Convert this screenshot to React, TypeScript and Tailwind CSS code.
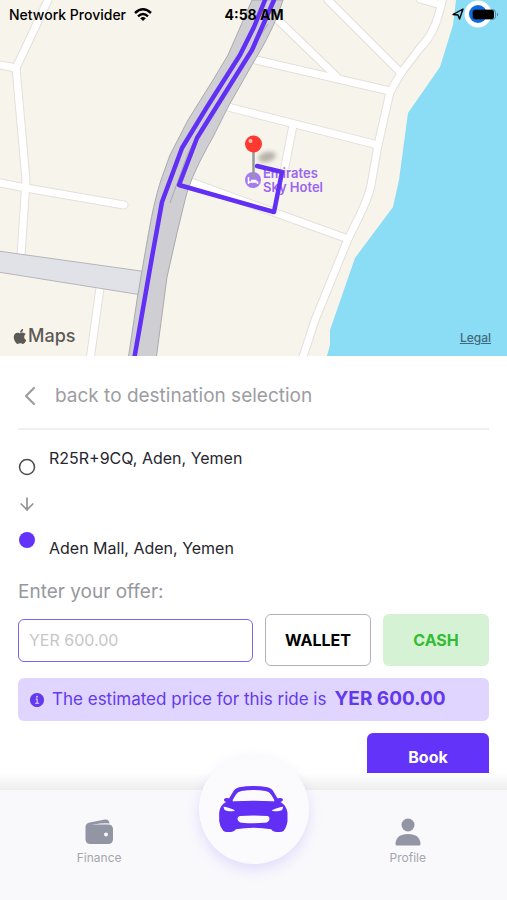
import { useState } from "react";
import { ArrowDown, ChevronLeft, Circle } from "lucide-react";
import { FaApple } from "react-icons/fa";
import { IoInformationCircle } from "react-icons/io5";

const streets = [
    "M48 0 L16 68 L0 65",
    "M16 68 L26 180 L21 256",
    "M0 183 L26 188 L124 205",
    "M100 288 L90 360",
    "M328 0 L401 73",
    "M278 20 L336 76",
    "M256 60 L390 91",
    "M420 -1 L441 5",
    "M443 -4 C438 22 432 36 420 48 L401 73 L390 92 L378 145 L371 185 C368 200 360 215 348 239 L315 320 L302 360",
    "M228 107 L378 145",
    "M293 125 L284 172",
    "M191 182 L276 213 L348 239",
];

const mainRoad =
    "M252 0 L228 55 L213 80 L188 120 L170 155 L161 180 C153 205 150 225 143 265 L137 300 L128 360 L156 360 L167 277 L177 233 L185 200 C190 180 200 160 213 137 L228 107 L253 63 C266 42 276 22 283 0 Z";

function StatusBar() {
    return (
        <div className="absolute inset-x-0 top-0 z-10 grid h-7 grid-cols-3 items-center pl-[9px] pr-2 text-black">
            <div className="flex items-center gap-2 whitespace-nowrap text-[14px] font-medium">
                Network Provider
                <svg viewBox="0 0 18 13" className="h-[13px] w-[18px] shrink-0">
                    <g fill="none" stroke="currentColor" strokeWidth="2.4">
                        <path d="M1 5 Q9 -2.400 17 5" />
                        <path d="M4 8.300 Q9 3.600 14 8.300" />
                    </g>
                    <path d="M6.200 10.200 Q9 7.800 11.800 10.200 L9 13 Z" fill="currentColor" />
                </svg>
            </div>
            <div className="text-center text-[14px] font-bold">4:58 AM</div>
            <div className="flex items-center justify-end gap-2">
                <svg viewBox="0 0 12 12" className="h-3 w-3">
                    <path d="M1 6.500 L11 1 L7.500 11 L6 7 Z" fill="none" stroke="currentColor" strokeWidth="1.4" strokeLinejoin="round" />
                </svg>
                <svg viewBox="0 0 27 11" className="h-[11px] w-[27px]">
                    <rect x="0.500" y="0.500" width="23" height="10" rx="3" fill="none" stroke="#111" strokeOpacity="0.4" />
                    <rect x="1" y="1" width="21" height="9" rx="2" fill="currentColor" />
                    <path d="M25 3.500 Q27 5.500 25 7.500 Z" fill="#111" fillOpacity="0.5" />
                </svg>
            </div>
        </div>
    );
}

function RideMap() {
    return (
        <section className="relative min-h-[280px] flex-1 overflow-hidden bg-[#f7f4ec]">
            <svg viewBox="0 0 507 356" preserveAspectRatio="xMidYMid slice" className="absolute inset-0 h-full w-full">
                {/* Sea */}
                <path d="M456 0 L453 25 L440 67 L408 113 L399 180 L393 207 L355 258 L330 330 L330 345 L327 356 H507 V0 Z" fill="#8bdcf5" />

                {/* Streets */}
                <g fill="none" strokeLinecap="round" strokeLinejoin="round">
                    {streets.map((d) => <path key={d} d={d} stroke="#e3e0dc" strokeWidth="9" />)}
                    {streets.map((d) => <path key={d} d={d} stroke="#fff" strokeWidth="7" />)}
                </g>
                <path d="M-2 251 L148 272 L142 295 L-2 272 Z" fill="#e1e2e7" stroke="#b5b5ba" />
                <path d={mainRoad} fill="#cfcfd3" stroke="#aaaaae" />
                <path d="M268 24 L206 120 L188 153 L170 203" fill="none" stroke="#aaaaae" />

                {/* Hotel */}
                <circle cx="253" cy="180" r="8" fill="#a47cf0" />
                <path d="M248.500 177 V184 M248.500 182 H257.500 V184 M251 180.500 H256.500" fill="none" stroke="#fff" strokeWidth="1.5" />
                <g fill="#9b66ee" stroke="#f7f4ec" strokeWidth="2" paintOrder="stroke" fontSize="13" fontWeight="600">
                    <text x="263" y="178">Emirates</text>
                    <text x="263" y="192">Sky Hotel</text>
                </g>

                {/* Route */}
                <g fill="none" stroke="#6230f5" strokeWidth="4.500" strokeLinecap="round" strokeLinejoin="round">
                    <path d="M265 0 L254 27 L240 55 L207 107 L182 148 L162 202 L152 257 L134 360" />
                    <path d="M274 0 L252 50 L197 138 L179 185 L274 212 L282 172 L257 166" />
                </g>

                {/* Pin */}
                <ellipse cx="267" cy="157" rx="9" ry="5" fill="#77736a" opacity="0.5" transform="rotate(-15 267 157)" className="blur-[2px]" />
                <path d="M253.500 150 V177" stroke="#98989b" strokeWidth="2.500" strokeLinecap="round" />
                <circle cx="253.500" cy="144" r="8.500" fill="#ff3830" />
                <circle cx="250.500" cy="141" r="2" fill="#ffc1bd" />

                {/* Current location */}
                <circle cx="478" cy="14" r="13.500" fill="#fff" />
                <circle cx="478" cy="14" r="9" fill="#0b6be0" />
            </svg>
            <StatusBar />
            <div className="absolute bottom-2 left-3 flex items-center text-[18px] font-medium leading-6 text-[#5b5a55]">
                <FaApple className="h-[17px] w-4" />
                <span>Maps</span>
            </div>
            <a href="#legal" className="absolute bottom-2.5 right-4 text-[12px] font-medium leading-4 text-[#42687c] underline">Legal</a>
        </section>
    );
}

function CarIcon() {
    return (
        <svg viewBox="0 0 206 138" className="h-[46px] w-[69px]">
            <path
                fillRule="evenodd"
                fill="#6230f5"
                d="M60 4 Q102 -4 145 4 Q158 7 165 20 L175 37 Q190 33 192 41 Q190 46 184 48 Q202 58 205 80 V106 Q202 125 193 135 Q190 138 181 138 H170 Q160 138 156 130 Q102 120 50 130 Q46 138 36 138 H22 Q14 138 11 133 Q2 122 0 105 V80 Q2 57 21 48 Q14 46 14 41 Q16 33 30 37 L40 20 Q47 7 60 4 Z M67 15 Q55 17 50 26 L41 41 Q39 47 45 46 Q102 43 161 46 Q167 47 165 41 L156 26 Q151 17 139 15 Q102 9 67 15 Z M13 62 Q25 62 47 73 Q47 76 38 76 Q18 76 15 70 Z M192 62 Q180 62 158 73 Q158 76 167 76 Q187 76 190 70 Z M63 90 Q102 87 145 90 Q151 91 151 98 Q150 109 137 110 Q102 113 69 110 Q56 109 55 98 Q55 91 63 90 Z"
            />
        </svg>
    );
}

function WalletIcon() {
    return (
        <svg viewBox="0 0 28 26" className="h-[26px] w-7" fill="#9295a3">
            <path d="M0.500 8 Q0.500 4 6 3.300 L20 0.500 Q24 0 24.500 4.500 Q20 3.500 8 5.500 Z" />
            <path fillRule="evenodd" d="M0.500 8 Q1 5.500 4 5.500 H23 Q28 5.500 28 10.500 V20 Q28 25 23 25 H5.500 Q0.500 25 0.500 20 Z M21 13.500 A2 2 0 1 0 21 17.500 A2 2 0 1 0 21 13.500 Z" />
        </svg>
    );
}

function ProfileIcon() {
    return (
        <svg viewBox="0 0 28 28" className="h-7 w-7" fill="#9295a3">
            <circle cx="14" cy="7" r="6.500" />
            <path d="M1.500 26 Q2 16 14 16 Q26 16 26.500 26 Q26.500 27.500 25 27.500 H3 Q1.500 27.500 1.500 26 Z" />
        </svg>
    );
}

function BookingSheet() {
    const [offer, setOffer] = useState("");

    return (
        <section className="bg-white px-[18px]">
            <button className="flex h-[74px] w-full items-center gap-[9px] border-b-2 border-[#f0f0f0] pt-2 text-[19px] text-[#9c9da1]">
                <ChevronLeft className="-ml-1 h-8 w-8" strokeWidth={1.6} />
                back to destination selection
            </button>

            <div className="mt-4 flex gap-[13px]">
                <div className="flex w-[18px] flex-col items-center justify-between py-3">
                    <Circle className="h-[18px] w-[18px] text-[#4a4a50]" />
                    <ArrowDown className="h-5 w-5 text-[#929296]" />
                    <span className="h-4 w-4 rounded-full bg-[#6433fa]" />
                </div>
                <div className="flex h-[114px] flex-col justify-between text-base text-[#26262e]">
                    <p>R25R+9CQ, Aden, Yemen</p>
                    <p>Aden Mall, Aden, Yemen</p>
                </div>
            </div>

            <label htmlFor="offer" className="mt-[18px] block text-[19px] leading-7 text-[#97989d]">Enter your offer:</label>
            <div className="mt-2 flex items-center gap-3">
                <input
                    id="offer"
                    value={offer}
                    onChange={(e) => setOffer(e.target.value)}
                    placeholder="YER 600.00"
                    className="h-[43px] min-w-0 flex-1 rounded-md border border-[#7f62ea] px-2.5 text-base outline-none placeholder:text-[#c6c6c8]"
                />
                <button className="h-[52px] w-[106px] rounded-md border border-[#b4b4b6] text-base font-bold text-black">WALLET</button>
                <button className="h-[52px] w-[106px] rounded-md bg-[#d5f3d4] text-base font-bold text-[#31bd32]">CASH</button>
            </div>

            <div className="mt-3 flex h-[43px] items-center rounded-md bg-[#dfd5fe] px-2.5 text-[#6439ee]">
                <IoInformationCircle className="h-[18px] w-[18px] shrink-0" />
                <span className="ml-1.5 text-[17px]">The estimated price for this ride is</span>
                <strong className="ml-2 text-[19px] font-bold">YER 600.00</strong>
            </div>

            <div className="mt-3 flex h-10 justify-end overflow-hidden">
                <button className="h-12 w-[122px] rounded-md bg-[#6433fa] text-base font-bold text-white">Book</button>
            </div>
        </section>
    );
}

function TabBar() {
    return (
        <nav className="relative grid h-[110px] grid-cols-3 bg-[#f9f9fc] px-[22px] pt-7 text-[12px] text-[#a5a6ad]">
            <a href="#finance" className="flex flex-col items-center gap-0.5">
                <span className="flex h-7 items-center">
                    <WalletIcon />
                </span>
                <span className="leading-5">Finance</span>
            </a>
            <span />
            <a href="#profile" className="flex flex-col items-center gap-0.5">
                <ProfileIcon />
                <span className="leading-5">Profile</span>
            </a>
            <button
                aria-label="Ride"
                className="absolute -top-9 left-1/2 flex h-[110px] w-[110px] -translate-x-1/2 items-center justify-center rounded-full bg-[#fbfbfd] shadow-[0_6px_14px_rgba(98,48,245,0.14)]"
            >
                <CarIcon />
            </button>
        </nav>
    );
}

export default function App() {
    return (
        <main className="flex min-h-screen flex-col bg-white font-['Inter','Liberation_Sans',sans-serif]">
            <RideMap />
            <BookingSheet />
            <div className="h-[17px] bg-gradient-to-b from-white to-[#eeeeee]" />
            <TabBar />
        </main>
    );
}
